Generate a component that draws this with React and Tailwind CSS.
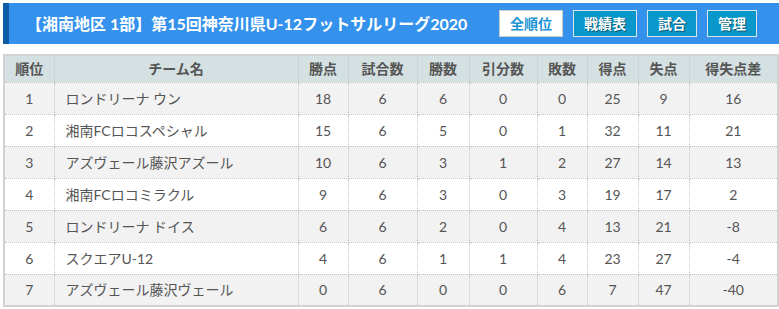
const rows = [
  [1, 'ロンドリーナ ウン', 18, 6, 6, 0, 0, 25, 9, 16],
  [2, '湘南FCロコスペシャル', 15, 6, 5, 0, 1, 32, 11, 21],
  [3, 'アズヴェール藤沢アズール', 10, 6, 3, 1, 2, 27, 14, 13],
  [4, '湘南FCロコミラクル', 9, 6, 3, 0, 3, 19, 17, 2],
  [5, 'ロンドリーナ ドイス', 6, 6, 2, 0, 4, 13, 21, -8],
  [6, 'スクエアU-12', 4, 6, 1, 1, 4, 23, 27, -4],
  [7, 'アズヴェール藤沢ヴェール', 0, 6, 0, 0, 6, 7, 47, -40],
]

const heads = ['順位', 'チーム名', '勝点', '試合数', '勝数', '引分数', '敗数', '得点', '失点', '得失点差']
const widths = ['w-[50px]', 'w-[244px]', 'w-[50px]', 'w-[69px]', 'w-[52px]', 'w-[68px]', 'w-[50px]', 'w-[51px]', 'w-[51px]', 'w-[89px]']

function NavButton({ label, active, className }) {
  return (
    <button
      type="button"
      className={`h-[27px] border text-[14px] font-bold ${className} ${
        active
          ? 'border-[#cccccc] bg-white text-[#1b93d4]'
          : 'border-[#d8e6ee] bg-[#0a98cc] text-white [text-shadow:1px_1px_1px_rgba(0,0,0,0.45)]'
      }`}
    >
      {label}
    </button>
  )
}

export default function App() {
  return (
    <div className="h-[309px] w-[779px] bg-white pl-[3px] pt-[3px] font-['Lato','Noto_Sans_CJK_JP',sans-serif] text-[#555555]">
      <div className="flex h-[41px] items-center border-l-[6px] border-[#0f5ba6] bg-[#3592ec] pl-[17px] pr-[22px]">
        <h1 className="flex-1 text-[16px] font-bold text-white">【湘南地区 1部】第15回神奈川県U-12フットサルリーグ2020</h1>
        <div className="flex gap-[10px]">
          <NavButton label="全順位" active className="w-[64px]" />
          <NavButton label="戦績表" className="w-[64px]" />
          <NavButton label="試合" className="w-[50px]" />
          <NavButton label="管理" className="w-[50px]" />
        </div>
      </div>

      <table className="mt-[10px] w-[774px] table-fixed border-collapse border-2 border-[#d2d2d2] text-[14px]">
        <thead>
          <tr className="h-[27px] bg-[#d4e0e1]">
            {heads.map((h, i) => (
              <th
                key={h}
                className={`${widths[i]} border-b border-r border-dotted border-b-[#c4c4c4] border-r-[#c4c4c4] font-bold`}
              >
                {h}
              </th>
            ))}
          </tr>
        </thead>
        <tbody>
          {rows.map((r, ri) => (
            <tr key={r[0]} className={`h-[32px] ${ri % 2 === 0 ? 'bg-[#f2f2f2]' : 'bg-white'}`}>
              {r.map((v, ci) => (
                <td
                  key={ci}
                  className={`border border-dotted border-[#c4c4c4] ${ci === 1 ? 'pl-[11px] text-left' : 'text-center'}`}
                >
                  {v}
                </td>
              ))}
            </tr>
          ))}
        </tbody>
      </table>
    </div>
  )
}
